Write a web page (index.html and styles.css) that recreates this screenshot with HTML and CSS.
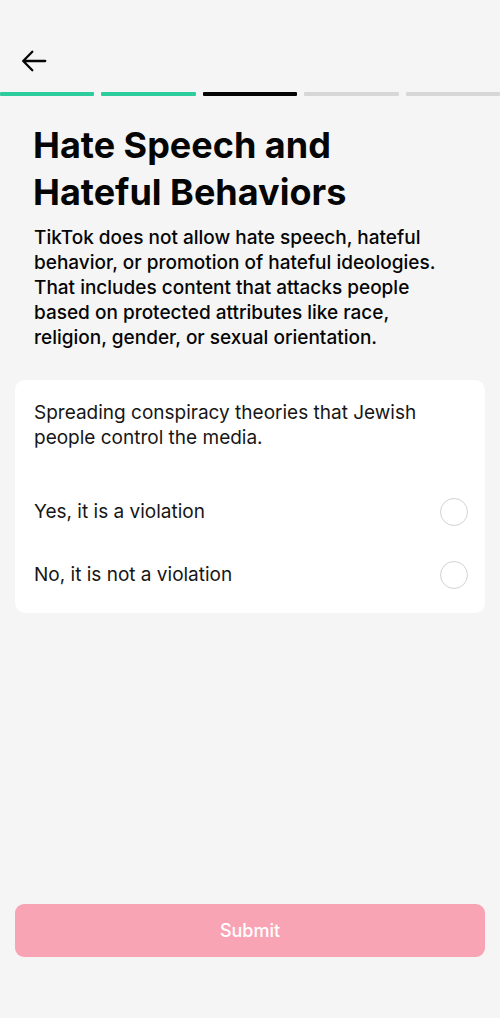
FILE: index.html
```html
<!DOCTYPE html>
<html lang="en">
<head>
<meta charset="utf-8">
<meta name="viewport" content="width=device-width, initial-scale=1">
<title>Hate Speech and Hateful Behaviors</title>
<link rel="stylesheet" href="styles.css">
</head>
<body>
<div class="screen">
  <header class="topbar">
    <button class="back" type="button" aria-label="Back">
      <svg class="back-icon" viewBox="0 0 28 24" fill="none" stroke="currentColor" stroke-width="2.3" stroke-linecap="round" stroke-linejoin="round" aria-hidden="true">
        <path d="M12.300 2.800 3.200 12l9.100 9.200M3.200 12H25.200"/>
      </svg>
    </button>
  </header>
  <div class="progress" role="progressbar" aria-label="Quiz progress" aria-valuemin="0" aria-valuemax="5" aria-valuenow="2">
    <span class="step done"></span>
    <span class="step done"></span>
    <span class="step current"></span>
    <span class="step"></span>
    <span class="step"></span>
  </div>
  <main class="content">
    <h1 class="title">Hate Speech and<br>Hateful Behaviors</h1>
    <p class="intro">TikTok does not allow hate speech, hateful<br>behavior, or promotion of hateful ideologies.<br>That includes content that attacks people<br>based on protected attributes like race,<br>religion, gender, or sexual orientation.</p>
    <form class="quiz" id="quiz">
      <fieldset class="card">
        <legend class="question">Spreading conspiracy theories that Jewish<br>people control the media.</legend>
        <label class="option"><span>Yes, it is a violation</span><input class="radio" type="radio" name="answer" value="yes"></label>
        <label class="option"><span>No, it is not a violation</span><input class="radio" type="radio" name="answer" value="no"></label>
      </fieldset>
      <button class="submit" type="submit">Submit</button>
    </form>
  </main>
</div>
</body>
</html>
```
FILE: styles.css
```css
* { box-sizing: border-box; }
body {
  margin: 0;
  background: #f5f5f5;
  color: #050505;
  font-family: Inter, "Liberation Sans", sans-serif;
}
.screen {
  min-height: 100vh;
  display: flex;
  flex-direction: column;
}
.topbar { padding: 49px 20px 19px; }
.back {
  display: block;
  padding: 0;
  border: 0;
  background: none;
  color: inherit;
}
.back-icon { display: block; width: 28px; height: 24px; }
.progress {
  display: flex;
  gap: 7px;
}
.step { flex: 1; height: 4px; border-radius: 1px; background: #d7d7d7; }
.done { background: #2dcc9c; }
.current { background: #050505; }
.content {
  flex: 1;
  display: flex;
  flex-direction: column;
  padding: 26px 15px 61px;
}
.title {
  margin: 0;
  padding: 0 18px;
  font-size: 36px;
  line-height: 47px;
  font-weight: 700;
}
.intro {
  margin: 9px 0 30px;
  padding: 0 19px;
  font-size: 19px;
  line-height: 25px;
  font-weight: 500;
}
.quiz {
  flex: 1;
  display: flex;
  flex-direction: column;
  justify-content: space-between;
}
.card {
  margin: 0;
  padding: 20px 17px 7px 19px;
  border: 0;
  border-radius: 10px;
  background: #fff;
  color: #161616;
  font-size: 19px;
  line-height: 25px;
}
.question { float: left; width: 100%; padding: 0; margin-bottom: 30px; }
.option {
  clear: both;
  display: flex;
  align-items: center;
  justify-content: space-between;
  height: 63px;
}
.radio {
  appearance: none;
  width: 28px;
  height: 28px;
  margin: 0;
  border: 1px solid #d2d2d2;
  border-radius: 50%;
}
.radio:checked { border: 8px solid #fe2c55; }
.submit {
  height: 53px;
  border: 0;
  border-radius: 9px;
  background: #f9a4b5;
  color: #fff;
  font: 500 18px/24px Inter, "Liberation Sans", sans-serif;
}
```
